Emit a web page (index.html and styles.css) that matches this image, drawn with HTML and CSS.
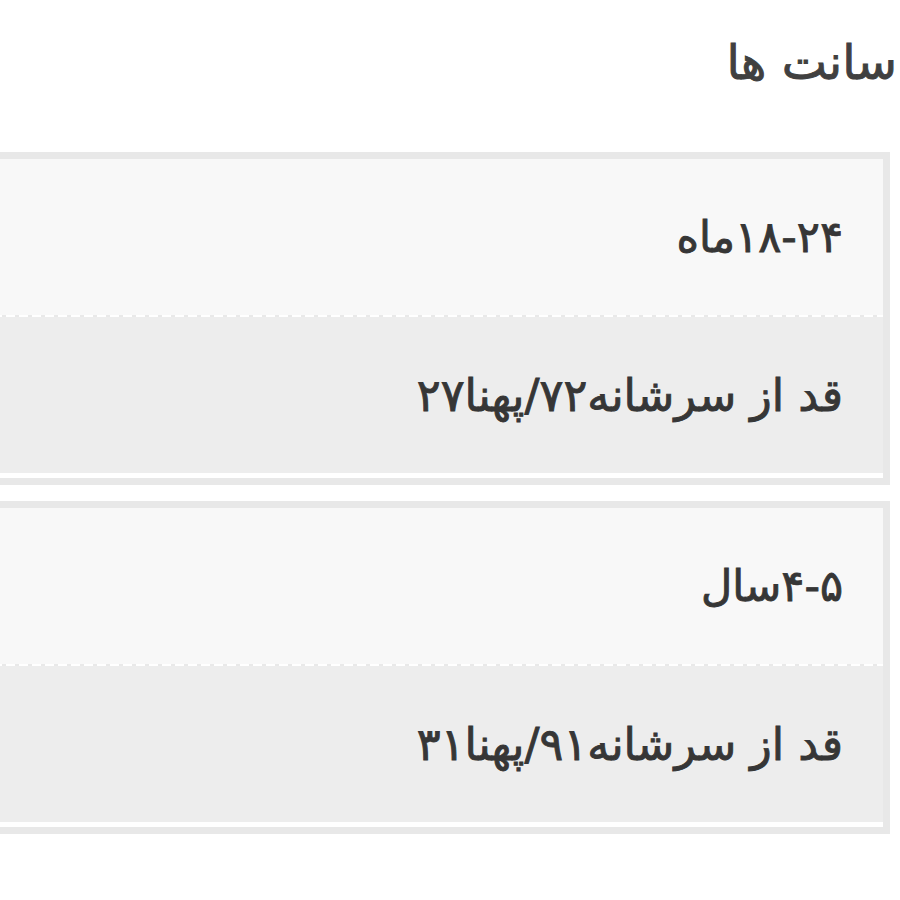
FILE: index.html
```html
<!DOCTYPE html>
<html lang="fa" dir="rtl">
<head>
<meta charset="utf-8">
<link rel="stylesheet" href="styles.css">
</head>
<body>
<div class="page">
  <h2 class="title">سانت ها</h2>
  <div class="cards">
    <div class="card">
      <div class="row row-head">۱۸-۲۴ماه</div>
      <div class="row row-body">قد از سرشانه۷۲/پهنا۲۷</div>
    </div>
    <div class="card">
      <div class="row row-head">۴-۵سال</div>
      <div class="row row-body">قد از سرشانه۹۱/پهنا۳۱</div>
    </div>
  </div>
</div>
</body>
</html>
```
FILE: styles.css
```css
html, body {
  margin: 0;
  padding: 0;
  background: #ffffff;
}
body {
  width: 900px;
  height: 900px;
  overflow: hidden;
  font-family: "DejaVu Sans", "Noto Sans", sans-serif;
  color: #363636;
}
.page {
  direction: rtl;
  padding: 0 3px 0 0;
}
.title {
  margin: 0 0 28px 0;
  font-size: 48px;
  font-weight: normal;
  -webkit-text-stroke: 0.9px #404040;
  line-height: 124px;
  height: 124px;
  color: #404040;
}
.cards {
  display: flex;
  flex-direction: column;
  gap: 16px;
  margin-right: 7px;
  margin-left: -40px;
}
.card {
  border: 7px solid #e8e8e8;
  display: flex;
  flex-direction: column;
}
.row {
  display: flex;
  align-items: center;
  height: 156px;
  padding-right: 40px;
  font-size: 43px;
  font-weight: normal;
  -webkit-text-stroke: 0.9px #363636;
  box-sizing: content-box;
}
.row-head {
  background-color: #f8f8f8;
  border-bottom: 2px solid transparent;
  background-image: repeating-linear-gradient(90deg, #ffffff 0 9px, #e9e9e9 9px 13px);
  background-origin: border-box;
  background-size: 100% 2px;
  background-position: bottom;
  background-repeat: no-repeat;
}
.row-body {
  background-color: #ededed;
  border-bottom: 5px solid #ffffff;
  font-size: 44.5px;
}
```
